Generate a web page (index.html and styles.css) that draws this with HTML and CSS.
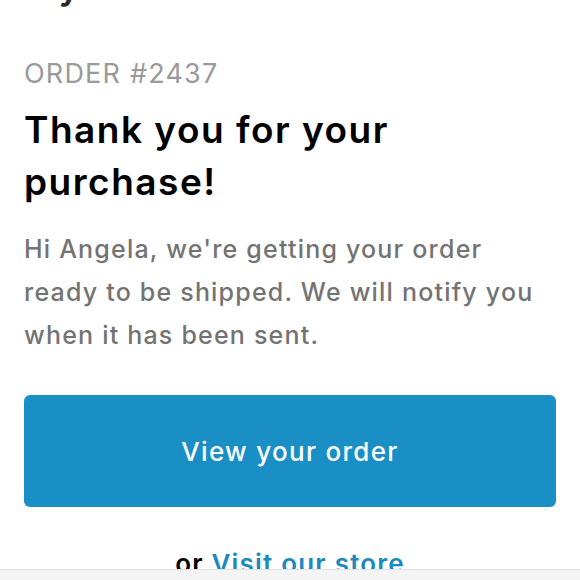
FILE: index.html
```html
<!doctype html>
<html lang="en">

<head>
  <meta charset="utf-8" />
  <meta name="viewport" content="width=device-width, initial-scale=1">
  <title>Order confirmed</title>
  <link rel="stylesheet" href="styles.css">
</head>

<body>
  <div class="page">
    <div class="shop-name-clip">
      <div class="shop-name">Ivy Goods</div>
    </div>

    <div class="order-number">Order #2437</div>
    <h1 class="page-title">Thank you for your purchase!</h1>
    <p class="message">Hi Angela, we're getting your order ready to be shipped. We will notify you when it has been sent.</p>

    <a class="order-button" href="#">View your order</a>

    <div class="store-link">or <a href="#">Visit our store</a></div>
  </div>

  <div class="bottom-bar"></div>
</body>

</html>
```

FILE: styles.css
```css
html,
body {
  height: 100%;
  margin: 0;
}

body {
  background-color: #ffffff;
  font-family: Inter, Roboto, sans-serif;
  overflow: hidden;
}

.page {
  padding: 0 24px;
}

.shop-name-clip {
  height: 10px;
  overflow: hidden;
}

.shop-name {
  margin-top: -35px;
  font-weight: 600;
  font-size: 36px;
  line-height: 42px;
  letter-spacing: 1.5px;
  color: #2a2a2a;
}

.order-number {
  margin-top: 46px;
  font-size: 27px;
  line-height: 36px;
  letter-spacing: 1.2px;
  color: #9a9a9a;
  text-transform: uppercase;
}

.page-title {
  margin: 12px 0 0 0;
  font-weight: 600;
  font-size: 37px;
  line-height: 52px;
  letter-spacing: 1.5px;
  color: #000000;
}

.message {
  margin: 20px 0 0 0;
  font-size: 25px;
  font-weight: 500;
  line-height: 43px;
  letter-spacing: 1.2px;
  color: #737373;
}

.order-button {
  display: flex;
  align-items: center;
  justify-content: center;
  height: 112px;
  margin-top: 38px;
  border-radius: 6px;
  background-color: #1a8fc6;
  color: #ffffff;
  font-size: 26px;
  font-weight: 500;
  letter-spacing: 1.3px;
  text-decoration: none;
}

.store-link {
  margin-top: 41px;
  text-align: center;
  font-size: 26px;
  font-weight: 600;
  letter-spacing: 1.2px;
  color: #000000;
}

.store-link a {
  color: #1b8ac0;
  text-decoration: none;
}

.bottom-bar {
  position: fixed;
  left: 0;
  right: 0;
  bottom: 0;
  height: 10px;
  background-color: #f4f4f4;
  border-top: 1px solid #e2e2e2;
}
```
